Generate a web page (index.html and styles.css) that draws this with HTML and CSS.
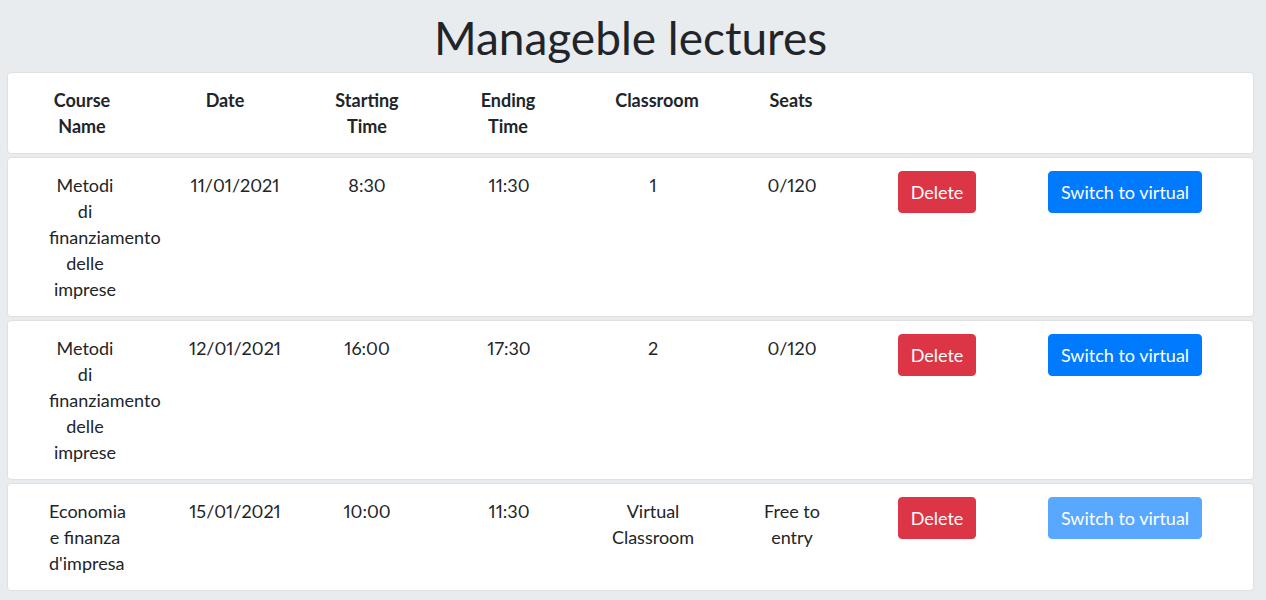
FILE: index.html
```html
<!DOCTYPE html>
<html lang="en">
<head>
<meta charset="utf-8">
<title>Manageble lectures</title>
<link rel="stylesheet" href="styles.css">
</head>
<body>
<main class="page">
  <h1 class="title">Manageble lectures</h1>
  <div class="card head-row">
    <div class="hcell">Course<br>Name</div>
    <div class="hcell">Date</div>
    <div class="hcell">Starting<br>Time</div>
    <div class="hcell">Ending<br>Time</div>
    <div class="hcell">Classroom</div>
    <div class="hcell">Seats</div>
  </div>
  <div class="card row">
    <div class="cell course">Metodi di finanziamento delle imprese</div>
    <div class="cell">11/01/2021</div>
    <div class="cell">8:30</div>
    <div class="cell">11:30</div>
    <div class="cell room">1</div>
    <div class="cell seats">0/120</div>
    <div class="cell"><button class="btn btn-danger">Delete</button></div>
    <div class="cell"><button class="btn btn-primary">Switch to virtual</button></div>
  </div>
  <div class="card row">
    <div class="cell course">Metodi di finanziamento delle imprese</div>
    <div class="cell">12/01/2021</div>
    <div class="cell">16:00</div>
    <div class="cell">17:30</div>
    <div class="cell room">2</div>
    <div class="cell seats">0/120</div>
    <div class="cell"><button class="btn btn-danger">Delete</button></div>
    <div class="cell"><button class="btn btn-primary">Switch to virtual</button></div>
  </div>
  <div class="card row">
    <div class="cell course">Economia e finanza d'impresa</div>
    <div class="cell">15/01/2021</div>
    <div class="cell">10:00</div>
    <div class="cell">11:30</div>
    <div class="cell room">Virtual Classroom</div>
    <div class="cell seats">Free to entry</div>
    <div class="cell"><button class="btn btn-danger">Delete</button></div>
    <div class="cell"><button class="btn btn-primary" disabled>Switch to virtual</button></div>
  </div>
</main>
</body>
</html>
```
FILE: styles.css
```css
* { box-sizing: border-box; }

html, body {
  margin: 0;
  background: #e9ecef;
}

body {
  font-family: Lato, "Liberation Sans", sans-serif;
  font-size: 18px;
  line-height: 26px;
  color: #212529;
  font-variant-numeric: proportional-nums;
}

.page {
  padding: 0 12px 0 7px;
}

.title {
  margin: 10px 0 7px;
  font-size: 46px;
  line-height: 55px;
  font-weight: 400;
  text-align: center;
}

.card {
  background: #fff;
  border: 1px solid #dfe0e1;
  border-radius: 4px;
  margin-bottom: 3px;
  padding: 14px 0;
}

.head-row {
  display: grid;
  grid-template-columns: 148px 138px 146px 136px 162px 106px 1fr;
  font-weight: 700;
}

.hcell {
  text-align: center;
}

.row {
  display: grid;
  grid-template-columns: 153px 148px 116px 168px 120px 158px 132px 244px;
}

.cell {
  text-align: center;
}

.cell.course {
  padding: 0 40px 0 41px;
}

.cell.room {
  padding: 0 15px;
}

.cell.seats {
  padding: 0 45px;
}

.btn {
  font: inherit;
  line-height: 26px;
  color: #fff;
  border: 1px solid transparent;
  border-radius: 4px;
  padding: 7px 12px;
  margin-top: -1px;
  cursor: pointer;
}

.btn-danger {
  background: #dc3545;
  border-color: #dc3545;
}

.btn-primary {
  background: #007bff;
  border-color: #007bff;
}

.btn-primary:disabled {
  opacity: 0.65;
  cursor: default;
}
```
